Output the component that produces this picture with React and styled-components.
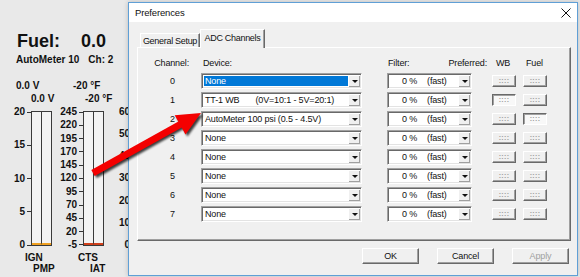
import React from "react";
import styled, { createGlobalStyle } from "styled-components";

const GlobalStyle = createGlobalStyle`
  html, body {
    margin: 0;
    padding: 0;
  }
  body {
    width: 580px;
    height: 277px;
    overflow: hidden;
    background: #e9e9e9;
    font-family: "Liberation Sans", Arial, sans-serif;
  }
`;

const channels = [
  { id: 0, device: "None", selected: true },
  { id: 1, device: "TT-1 WB", note: "(0V=10:1 - 5V=20:1)", wbPressed: true },
  { id: 2, device: "AutoMeter 100 psi (0.5 - 4.5V)", fuelPressed: true },
  { id: 3, device: "None" },
  { id: 4, device: "None" },
  { id: 5, device: "None" },
  { id: 6, device: "None" },
  { id: 7, device: "None" },
];

const gauges = [
  { labels: ["20", "15", "10", "5", "0"], scaleWidth: 23, gap: 0, left: "#f0a020", right: "#f0a020" },
  {
    labels: ["245", "220", "195", "170", "145", "120", "95", "70", "45", "20", "-5"],
    scaleWidth: 26,
    gap: 5,
    left: "#d2401a",
    right: "#d2401a",
  },
  { labels: ["60", "50", "40", "30", "20", "10", "0"], scaleWidth: 26, gap: 6, left: "#f0a020", right: "#f0a020" },
];

export default function App() {
  return (
    <Desktop>
      <GlobalStyle />
      <MainWindow>
        <FuelTitle>
          <span>Fuel:</span>
          <FuelValue>0.0</FuelValue>
        </FuelTitle>
        <InfoLine>
          <span>AutoMeter 10</span>
          <ChannelTag>Ch: 2</ChannelTag>
        </InfoLine>
        <ReadingRow $top={14} $indent={8}>
          <ReadingCell $width={57}>0.0 V</ReadingCell>
          <span>-20 °F</span>
        </ReadingRow>
        <ReadingRow $top={1} $indent={23}>
          <ReadingCell $width={54}>0.0 V</ReadingCell>
          <span>-20 °F</span>
        </ReadingRow>
        <GaugeRow>
          {gauges.map((g, i) => (
            <Gauge key={i} $gap={g.gap}>
              <Scale $width={g.scaleWidth}>
                {g.labels.map((l) => (
                  <ScaleLabel key={l}>{l}</ScaleLabel>
                ))}
              </Scale>
              <BarPair>
                <Bar $fill={g.left} />
                <Bar $fill={g.right} />
              </BarPair>
            </Gauge>
          ))}
        </GaugeRow>
        <NameRow $top={2} $indent={17}>
          <NameCell $width={53}>IGN</NameCell>
          <span>CTS</span>
        </NameRow>
        <NameRow $top={0} $indent={25}>
          <NameCell $width={57}>PMP</NameCell>
          <span>IAT</span>
        </NameRow>
      </MainWindow>

      <Dialog>
        <TitleBar>
          <span>Preferences</span>
          <CloseIcon viewBox="0 0 10 10">
            <path d="M0.5 0.5 L9.5 9.5 M9.5 0.5 L0.5 9.5" stroke="#111" strokeWidth="1" fill="none" />
          </CloseIcon>
        </TitleBar>
        <DialogBody>
          <TabBar>
            <Tab $width={60}>General Setup</Tab>
            <Tab $width={65} $active>
              ADC Channels
            </Tab>
          </TabBar>
          <TabPanel>
            <ChannelGrid>
              <HeadCell $align="right" $pad="0 12px 0 0">
                Channel:
              </HeadCell>
              <HeadCell $pad="0 0 0 2px">Device:</HeadCell>
              <HeadSplit>
                <span>Filter:</span>
                <span>Preferred:</span>
              </HeadSplit>
              <HeadCell $pad="0 0 0 4px">WB</HeadCell>
              <HeadCell $pad="0 0 0 3px">Fuel</HeadCell>

              {channels.map((c) => (
                <React.Fragment key={c.id}>
                  <ChannelNum>{c.id}</ChannelNum>
                  <Combo $width={161}>
                    <ComboText $selected={c.selected}>
                      {c.device}
                      {c.note && <DeviceNote>{c.note}</DeviceNote>}
                    </ComboText>
                    <DropButton>
                      <DropArrow />
                    </DropButton>
                  </Combo>
                  <Combo $width={85}>
                    <FilterText>
                      <span>0 %</span>
                      <FilterMode>(fast)</FilterMode>
                    </FilterText>
                    <DropButton>
                      <DropArrow />
                    </DropButton>
                  </Combo>
                  <PickButton $pressed={c.wbPressed}>::::</PickButton>
                  <PickButton $pressed={c.fuelPressed}>::::</PickButton>
                </React.Fragment>
              ))}
            </ChannelGrid>
          </TabPanel>
          <Footer>
            <PushButton>OK</PushButton>
            <PushButton>Cancel</PushButton>
            <PushButton $disabled>Apply</PushButton>
          </Footer>
        </DialogBody>
      </Dialog>

      <ArrowLayer viewBox="0 0 580 277">
        <defs>
          <filter id="shadowBlur" x="-20%" y="-20%" width="140%" height="140%">
            <feGaussianBlur stdDeviation="1.2" />
          </filter>
        </defs>
        <g transform="translate(2 2)" fill="#000" stroke="#000" opacity="0.75" filter="url(#shadowBlur)">
          <line x1="93" y1="173" x2="181" y2="123.5" strokeWidth="7" />
          <polygon points="201,113 185.5,134.5 174.7,115.3" strokeWidth="0" />
        </g>
        <line x1="93" y1="173" x2="181" y2="124" stroke="#f40000" strokeWidth="7" />
        <polygon points="201,113 185.5,134.5 174.7,115.3" fill="#f40000" />
      </ArrowLayer>
    </Desktop>
  );
}

const Desktop = styled.div`
  position: relative;
  width: 580px;
  height: 277px;
  overflow: hidden;
  background: #e9e9e9;
`;

const MainWindow = styled.div`
  display: flex;
  flex-direction: column;
  padding: 30px 0 0 8px;
  color: #111;
  font-weight: bold;
`;

const FuelTitle = styled.div`
  display: flex;
  padding-left: 9px;
  font-size: 18px;
  line-height: 22px;
`;

const FuelValue = styled.span`
  margin-left: 21px;
`;

const InfoLine = styled.div`
  display: flex;
  margin-top: 2px;
  padding-left: 8px;
  font-size: 10px;
  line-height: 12px;
`;

const ChannelTag = styled.span`
  margin-left: 9px;
`;

const ReadingRow = styled.div`
  display: flex;
  margin-top: ${(p) => p.$top}px;
  padding-left: ${(p) => p.$indent}px;
  font-size: 10px;
  line-height: 12px;
  white-space: nowrap;
`;

const ReadingCell = styled.span`
  width: ${(p) => p.$width}px;
`;

const GaugeRow = styled.div`
  display: flex;
  margin-top: 2px;
`;

const Gauge = styled.div`
  display: flex;
  margin-left: ${(p) => p.$gap}px;
`;

const Scale = styled.div`
  display: flex;
  flex-direction: column;
  justify-content: space-between;
  width: ${(p) => p.$width}px;
  height: 143px;
  font-size: 10px;
`;

const ScaleLabel = styled.div`
  display: flex;
  justify-content: flex-end;
  align-items: center;
  height: 10px;
  line-height: 10px;

  &::after {
    content: "";
    width: 4px;
    height: 1px;
    margin-left: 2px;
    background: #333;
  }
`;

const BarPair = styled.div`
  display: flex;
  margin-top: 4px;
  width: 21px;
  height: 135px;
  box-sizing: border-box;
  border: 1px solid #3a3a3a;
`;

const Bar = styled.div`
  flex: 1;
  background: #f3f3f3;
  border-bottom: 2px solid ${(p) => p.$fill};

  & + & {
    border-left: 1px solid #3a3a3a;
  }
`;

const NameRow = styled.div`
  display: flex;
  margin-top: ${(p) => p.$top}px;
  padding-left: ${(p) => p.$indent}px;
  font-size: 10px;
  line-height: 11px;
`;

const NameCell = styled.span`
  width: ${(p) => p.$width}px;
`;

const Dialog = styled.div`
  position: absolute;
  left: 128px;
  top: 2px;
  width: 450px;
  height: 274px;
  box-sizing: border-box;
  display: flex;
  flex-direction: column;
  background: #f0f0f0;
  border: 1px solid #5f9fd6;
  box-shadow: 0 0 5px rgba(0, 0, 0, 0.2);
  font-size: 9px;
  letter-spacing: -0.15px;
  color: #111;
`;

const TitleBar = styled.div`
  display: flex;
  justify-content: space-between;
  align-items: center;
  height: 19px;
  padding: 0 6px 0 6px;
  background: #fff;
  font-size: 9.5px;
`;

const CloseIcon = styled.svg`
  width: 10px;
  height: 10px;
`;

const DialogBody = styled.div`
  display: flex;
  flex-direction: column;
  padding: 7px 6px 0 8px;
`;

const TabBar = styled.div`
  display: flex;
  align-items: flex-end;
  height: 18px;
  padding-left: 3px;
`;

const Tab = styled.div`
  position: relative;
  z-index: ${(p) => (p.$active ? 1 : 0)};
  width: ${(p) => p.$width}px;
  height: ${(p) => (p.$active ? 19 : 14)}px;
  margin-bottom: ${(p) => (p.$active ? -1 : 0)}px;
  box-sizing: border-box;
  display: flex;
  align-items: center;
  justify-content: center;
  padding-bottom: ${(p) => (p.$active ? 2 : 0)}px;
  background: #f0f0f0;
  border-top: 1px solid #fff;
  border-left: 1px solid #fff;
  border-right: 1px solid #696969;
  box-shadow: inset -1px 0 0 #a0a0a0;
  letter-spacing: -0.3px;
  white-space: nowrap;
`;

const TabPanel = styled.div`
  height: 194px;
  box-sizing: border-box;
  padding-top: 8px;
  background: #f0f0f0;
  border-top: 1px solid #fff;
  border-left: 1px solid #fff;
  border-right: 1px solid #696969;
  border-bottom: 1px solid #696969;
  box-shadow: inset -1px -1px 0 #a0a0a0;
`;

const ChannelGrid = styled.div`
  display: grid;
  grid-template-columns: 63px 186px 105px 31px 24px;
  grid-auto-rows: 16px;
  grid-template-rows: 14px;
  row-gap: 3px;
  align-items: center;
`;

const HeadCell = styled.div`
  padding: ${(p) => p.$pad || 0};
  text-align: ${(p) => p.$align || "left"};
  line-height: 14px;
  white-space: nowrap;
`;

const HeadSplit = styled.div`
  display: flex;
  justify-content: space-between;
  padding: 0 5px 0 1px;
  line-height: 14px;
`;

const ChannelNum = styled.div`
  padding-left: 6px;
  text-align: center;
`;

const Combo = styled.div`
  display: flex;
  width: ${(p) => p.$width}px;
  height: 16px;
  box-sizing: border-box;
  padding: 2px;
  background: #fff;
  border: 1px solid;
  border-color: #a0a0a0 #fff #fff #a0a0a0;
  box-shadow: inset 1px 1px 0 #696969, inset -1px -1px 0 #e3e3e3;
`;

const ComboText = styled.div`
  flex: 1;
  display: flex;
  align-items: center;
  padding-left: 1px;
  background: ${(p) => (p.$selected ? "#0078d7" : "transparent")};
  color: ${(p) => (p.$selected ? "#fff" : "#111")};
  white-space: nowrap;
  overflow: hidden;
`;

const DeviceNote = styled.span`
  margin-left: 16px;
`;

const FilterText = styled.div`
  flex: 1;
  display: flex;
  align-items: center;
  padding-left: 12px;
  white-space: nowrap;
`;

const FilterMode = styled.span`
  margin-left: 10px;
`;

const DropButton = styled.div`
  width: 11px;
  margin: -1px -1px -1px 0;
  display: flex;
  align-items: center;
  justify-content: center;
  background: #f0f0f0;
  border-left: 1px solid #fff;
  border-top: 1px solid #fff;
  box-shadow: inset -1px -1px 0 #a0a0a0;
`;

const DropArrow = styled.span`
  width: 0;
  height: 0;
  border-left: 3px solid transparent;
  border-right: 3px solid transparent;
  border-top: 3px solid #111;
`;

const PickButton = styled.div`
  width: 24px;
  height: 12px;
  box-sizing: border-box;
  display: flex;
  align-items: center;
  justify-content: center;
  padding-bottom: 1px;
  font-size: 7px;
  font-weight: bold;
  letter-spacing: 0.3px;
  color: #9a9a9a;
  background: ${(p) => (p.$pressed ? "#f8f8f8" : "#f0f0f0")};
  border: 1px solid;
  border-color: ${(p) => (p.$pressed ? "#696969 #fff #fff #696969" : "#fff #696969 #696969 #fff")};
  box-shadow: ${(p) => (p.$pressed ? "inset 1px 1px 0 #a0a0a0" : "inset -1px -1px 0 #a0a0a0")};
`;

const Footer = styled.div`
  display: flex;
  justify-content: flex-end;
  gap: 18px;
  margin-top: 7px;
  padding-right: 2px;
`;

const PushButton = styled.div`
  width: 57px;
  height: 16px;
  box-sizing: border-box;
  display: flex;
  align-items: center;
  justify-content: center;
  color: ${(p) => (p.$disabled ? "#a0a0a0" : "#111")};
  background: #f0f0f0;
  border: 1px solid;
  border-color: #fff #696969 #696969 #fff;
  box-shadow: inset -1px -1px 0 #a0a0a0;
`;

const ArrowLayer = styled.svg`
  position: absolute;
  left: 0;
  top: 0;
  width: 580px;
  height: 277px;
  pointer-events: none;
`;
